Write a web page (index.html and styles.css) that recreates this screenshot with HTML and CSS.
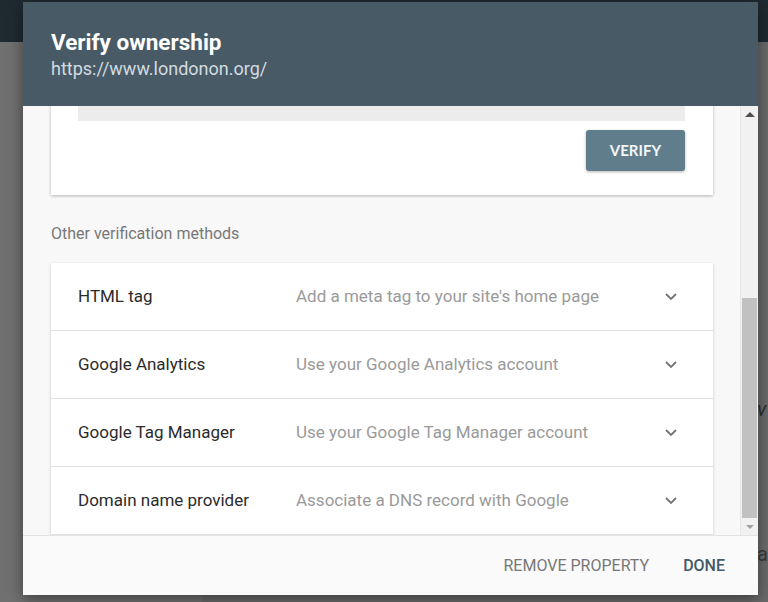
FILE: index.html
```html
<!DOCTYPE html>
<html>
<head>
	<title>Verify ownership</title>
	<link rel="stylesheet" href="styles.css">
</head>
<body>
<!-- page behind the dialog -->
<div class="page">
	<div class="page-bar"></div>
	<div class="page-main">
		<div class="page-side"></div>
		<div class="page-content">
			<span class="page-letter v">v</span>
			<span class="page-letter a">a</span>
		</div>
	</div>
</div>

<!-- dialog -->
<div class="dialog">
	<div class="dialog-head">
		<h1>Verify ownership</h1>
		<div class="site">https://www.londonon.org/</div>
	</div>

	<div class="dialog-body">
		<div class="scroll">
			<div class="card">
				<div class="field"></div>
				<div class="card-actions">
					<button class="verify">VERIFY</button>
				</div>
			</div>

			<div class="section-label">Other verification methods</div>

			<div class="methods">
				<div class="method">
					<div class="method-name">HTML tag</div>
					<div class="method-desc">Add a meta tag to your site's home page</div>
					<svg class="chev" viewBox="0 0 24 24"><path d="M7 10l5 5 5-5"/></svg>
				</div>
				<div class="method">
					<div class="method-name">Google Analytics</div>
					<div class="method-desc">Use your Google Analytics account</div>
					<svg class="chev" viewBox="0 0 24 24"><path d="M7 10l5 5 5-5"/></svg>
				</div>
				<div class="method">
					<div class="method-name">Google Tag Manager</div>
					<div class="method-desc">Use your Google Tag Manager account</div>
					<svg class="chev" viewBox="0 0 24 24"><path d="M7 10l5 5 5-5"/></svg>
				</div>
				<div class="method">
					<div class="method-name">Domain name provider</div>
					<div class="method-desc">Associate a DNS record with Google</div>
					<svg class="chev" viewBox="0 0 24 24"><path d="M7 10l5 5 5-5"/></svg>
				</div>
			</div>
		</div>

		<!-- fake scrollbar -->
		<div class="scrollbar">
			<div class="arrow up"></div>
			<div class="track">
				<div class="thumb"></div>
			</div>
			<div class="arrow down"></div>
		</div>
	</div>

	<div class="dialog-foot">
		<button class="text-btn grey">REMOVE PROPERTY</button>
		<button class="text-btn dark">DONE</button>
	</div>
</div>
</body>
</html>
```

FILE: styles.css
```css
body {
	margin: 0;
	width: 768px;
	height: 602px;
	overflow: hidden;
	font-family: Roboto, "Liberation Sans", sans-serif;
	background-color: #6d6d6d;
}

/* page behind */
.page {
	height: 602px;
	display: flex;
	flex-direction: column;
}

.page-bar {
	height: 42px;
	background-color: #1f2a30;
}

.page-main {
	flex: 1;
	display: flex;
}

.page-side {
	width: 202px;
	background-color: #707070;
}

.page-content {
	flex: 1;
	position: relative;
	background-color: #6a6a6a;
}

.page-letter {
	position: absolute;
	left: 555px;
	color: #2e2e2e;
	font-size: 20px;
}

.page-letter.v {
	top: 355px;
	font-style: italic;
}

.page-letter.a {
	top: 500px;
	color: #3a3a3a;
}

/* dialog */
.dialog {
	position: absolute;
	left: 23px;
	top: 2px;
	width: 735px;
	height: 593px;
	display: flex;
	flex-direction: column;
	background-color: #f8f8f8;
	box-shadow: 0 4px 14px rgba(0, 0, 0, 0.45);
}

.dialog-head {
	height: 104px;
	box-sizing: border-box;
	padding: 27px 28px 0;
	background-color: #475a66;
}

.dialog-head h1 {
	margin: 0;
	font-size: 22.5px;
	font-weight: 700;
	line-height: 26px;
	color: #ffffff;
}

.site {
	margin-top: 3px;
	font-size: 18px;
	line-height: 22px;
	color: #d3dbe0;
}

.dialog-body {
	flex: 1;
	display: flex;
	overflow: hidden;
}

.scroll {
	flex: 1;
	overflow: hidden;
	padding: 0 27px 0 28px;
}

.card {
	margin-top: -40px;
	padding: 0 28px 24px 27px;
	background-color: #ffffff;
	box-shadow: 0 1px 3px rgba(0, 0, 0, 0.28);
}

.field {
	height: 55px;
	background-color: #ececec;
}

.card-actions {
	display: flex;
	justify-content: flex-end;
	margin-top: 9px;
}

.verify {
	width: 99px;
	height: 41px;
	padding-bottom: 2px;
	border: none;
	border-radius: 3px;
	background-color: #607d8b;
	color: #f4f7f8;
	font-family: Lato, Roboto, sans-serif;
	font-weight: 700;
	font-size: 15px;
	box-shadow: 0 1px 3px rgba(0, 0, 0, 0.3);
}

.section-label {
	margin: 29px 0 19px;
	font-size: 16px;
	line-height: 20px;
	color: #777777;
}

.methods {
	background-color: #ffffff;
	box-shadow: 0 1px 3px rgba(0, 0, 0, 0.2);
}

.method {
	height: 67px;
	display: flex;
	align-items: center;
	padding: 0 30px 1px 27px;
	box-sizing: border-box;
	height: 68px;
	border-bottom: 1px solid #e2e2e2;
	font-size: 17px;
}

.method-name {
	width: 218px;
	color: #2b2b2b;
}

.method-desc {
	flex: 1;
	color: #9a9a9a;
}

.chev {
	width: 24px;
	height: 24px;
	fill: none;
	stroke: #757575;
	stroke-width: 1.8;
}

/* scrollbar */
.scrollbar {
	width: 17px;
	display: flex;
	flex-direction: column;
	background-color: #f1f1f1;
	border-left: 1px solid #e6e6e6;
}

.arrow {
	height: 17px;
	display: flex;
	align-items: center;
	justify-content: center;
}

.arrow.up::before {
	content: "";
	border-left: 5px solid transparent;
	border-right: 5px solid transparent;
	border-bottom: 5px solid #505050;
}

.arrow.down::before {
	content: "";
	border-left: 4px solid transparent;
	border-right: 4px solid transparent;
	border-top: 4px solid #a3a3a3;
}

.track {
	flex: 1;
	display: flex;
	flex-direction: column;
	justify-content: flex-end;
	padding: 0 1px;
}

.thumb {
	height: 220px;
	background-color: #c1c1c1;
}

/* footer */
.dialog-foot {
	height: 59px;
	display: flex;
	align-items: center;
	justify-content: flex-end;
	gap: 18px;
	padding-right: 25px;
	border-top: 1px solid #e3e3e3;
	background-color: #fafafa;
}

.text-btn {
	border: none;
	background: none;
	padding: 8px 8px;
	font-family: Roboto, sans-serif;
	font-size: 16px;
	font-weight: 400;
}

.text-btn.grey {
	color: #777777;
}

.text-btn.dark {
	color: #455a64;
	font-weight: 500;
}
```
